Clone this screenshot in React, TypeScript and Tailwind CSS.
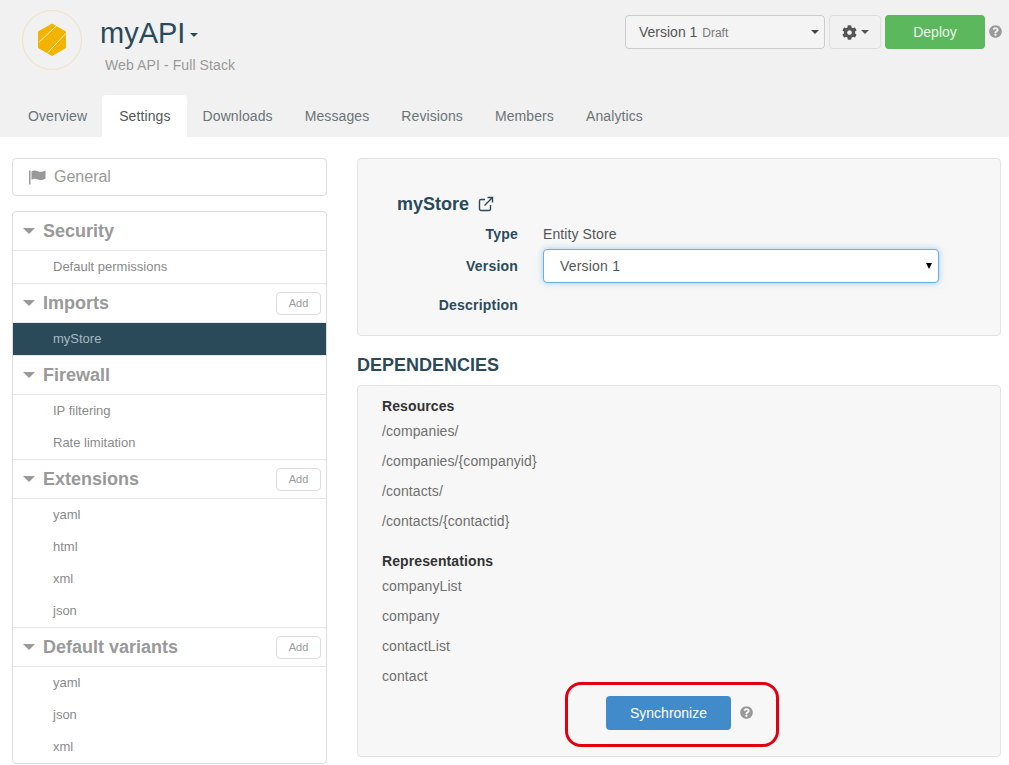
import { FaCog, FaQuestionCircle } from 'react-icons/fa';

const tabs = ['Overview', 'Settings', 'Downloads', 'Messages', 'Revisions', 'Members', 'Analytics'];

interface Section {
  title: string;
  add?: boolean;
  items: string[];
}

const sections: Section[] = [
  { title: 'Security', items: ['Default permissions'] },
  { title: 'Imports', add: true, items: ['myStore'] },
  { title: 'Firewall', items: ['IP filtering', 'Rate limitation'] },
  { title: 'Extensions', add: true, items: ['yaml', 'html', 'xml', 'json'] },
  { title: 'Default variants', add: true, items: ['yaml', 'json', 'xml'] },
];

const resources = ['/companies/', '/companies/{companyid}', '/contacts/', '/contacts/{contactid}'];
const representations = ['companyList', 'company', 'contactList', 'contact'];

function Caret({ className }: { className: string }) {
  return <span className={`inline-block w-0 h-0 border-x-[4px] border-x-transparent border-t-[4px] ${className}`} />;
}

function Logo() {
  return (
    <svg width="62" height="62" viewBox="0 0 62 62" className="shrink-0">
      <circle cx="31" cy="31" r="29.5" fill="none" stroke="#f0e2c0" strokeWidth="1" />
      <path d="M31 14.5 45 22.5 45 39 31 47 17 39 17 22.500Z" fill="#f2b400" />
      <path d="M18.5 32.700 35.700 16.700M26.700 43.700 45 24.300" stroke="#fff" strokeWidth="1" fill="none" opacity="0.85" />
    </svg>
  );
}

function Header() {
  return (
    <div className="bg-[#f1f1f1] h-[137px] flex flex-col">
      <div className="h-[95px] flex justify-between pl-[21px] pr-[7px]">
        <div className="flex pt-[9px]">
          <Logo />
          <div className="ml-[17px]">
            <div className="flex items-center h-[50px] text-[29px] text-[#2a4a5a]">
              myAPI
              <Caret className="border-t-[#2a4a5a] ml-[5px] mt-[2px]" />
            </div>
            <div className="ml-[5px] mt-[-4px] text-[14px] tracking-[0.1px] text-[#999]">Web API - Full Stack</div>
          </div>
        </div>
        <div className="flex items-start pt-[15px]">
          <div className="w-[200px] h-[34px] flex items-center justify-between pl-[13px] pr-[5px] bg-[#f4f4f4] border border-[#ccc] rounded text-[14px] text-[#555]">
            <span>
              Version 1 <span className="text-[12px] text-[#777] ml-[1px]">Draft</span>
            </span>
            <Caret className="border-t-[#444]" />
          </div>
          <div className="ml-[4px] w-[52px] h-[34px] flex items-center justify-center gap-[4px] border border-[#ddd] rounded text-[#555]">
            <FaCog className="text-[15px]" />
            <Caret className="border-t-[#555]" />
          </div>
          <div className="ml-[4px] w-[100px] h-[34px] flex items-center justify-center bg-[#5cb85c] rounded text-[14px] text-[#e9f5e9]">
            Deploy
          </div>
          <FaQuestionCircle className="ml-[4px] mt-[10px] text-[13px] text-[#999]" />
        </div>
      </div>
      <div className="flex h-[42px] pl-[12px]">
        {tabs.map((tab) => (
          <div
            key={tab}
            className={`flex items-center text-[14px] tracking-[0.1px] rounded-t ${
              tab === 'Settings' ? 'bg-white text-[#555] -ml-[1px] pl-[17px] pr-[16px]' : 'px-[16px] text-[#6b7478]'
            }`}
          >
            {tab}
          </div>
        ))}
      </div>
    </div>
  );
}

function Sidebar() {
  return (
    <div className="w-[315px] shrink-0">
      <div className="h-[38px] flex items-center pl-[16px] border border-[#ddd] rounded text-[16px] text-[#999]">
        <svg width="17" height="15" viewBox="0 0 17 15" fill="#999" className="mr-[8px]">
          <rect x="0" y="0.500" width="1.500" height="14" />
          <path d="M2.500 1.500C5 0 7 .5 9 1.300c2.500 1 4.500 .5 7.500-.8v8.300c-3 1.400-5 1.700-7.500.8C7 8.800 5 8.400 2.500 9.800Z" />
        </svg>
        General
      </div>
      <div className="mt-[15px] border border-[#ddd] rounded">
        {sections.map((section, i) => (
          <div key={section.title}>
            <div
              className={`flex items-center justify-between pl-[10px] pr-[5px] border-b border-[#e4e8ea] ${
                i > 0 ? 'h-[40px] border-t' : 'h-[39px]'
              }`}
            >
              <div className="flex items-center text-[18px] font-bold text-[#999]">
                <span className="inline-block w-0 h-0 mr-[8px] border-x-[6px] border-x-transparent border-t-[6px] border-t-[#999]" />
                {section.title}
              </div>
              {section.add && (
                <div className="w-[45px] h-[23px] flex items-center justify-center bg-white border border-[#ddd] rounded text-[11px] text-[#999]">
                  Add
                </div>
              )}
            </div>
            {section.items.map((item) => (
              <div
                key={item}
                className={`h-[32px] flex items-center pl-[40px] text-[13px] ${
                  item === 'myStore' ? 'bg-[#2a4a5a] text-[#a9b8c0]' : 'text-[#8a8a8a]'
                }`}
              >
                {item}
              </div>
            ))}
          </div>
        ))}
      </div>
    </div>
  );
}

function FormRow({ label, children, className }: { label: string; children?: React.ReactNode; className: string }) {
  return (
    <div className={`flex items-center ${className}`}>
      <div className="w-[160px] text-right text-[14px] font-bold tracking-[0.2px] text-[#2a4a5a]">{label}</div>
      <div className="ml-[25px]">{children}</div>
    </div>
  );
}

function Main() {
  return (
    <div className="w-[644px] ml-[30px] shrink-0">
      <div className="h-[178px] bg-[#f7f7f7] border border-[#e3e3e3] rounded pt-[33px] pl-[39px]">
        <div className="flex items-center h-[24px] text-[18px] font-bold text-[#2a4a5a]">
          myStore
          <svg width="16" height="16" viewBox="0 0 16 16" fill="none" stroke="#2a4a5a" strokeWidth="1.4" className="ml-[9px]">
            <path d="M12.500 9v4a1.500 1.500 0 0 1-1.500 1.500H3A1.500 1.500 0 0 1 1.500 13V5A1.500 1.500 0 0 1 3 3.500h4" />
            <path d="M6.500 9.500 14 2M9.500 1.500h5v5" />
          </svg>
        </div>
        <FormRow label="Type" className="h-[20px] mt-[8px] -ml-[39px]">
          <span className="text-[14px] tracking-[0.1px] text-[#555]">Entity Store</span>
        </FormRow>
        <FormRow label="Version" className="h-[34px] mt-[5px] -ml-[39px]">
          <div className="w-[396px] h-[34px] flex items-center justify-between pl-[16px] pr-[6px] bg-white border border-[#66afe9] rounded shadow-[0_0_6px_rgba(102,175,233,0.6)] text-[14px] tracking-[0.2px] text-[#555]">
            Version 1
            <span className="inline-block w-0 h-0 border-x-[3px] border-x-transparent border-t-[6px] border-t-black" />
          </div>
        </FormRow>
        <FormRow label="Description" className="h-[20px] mt-[12px] -ml-[39px]" />
      </div>
      <h2 className="mt-[19px] h-[20px] flex items-center text-[18px] font-bold text-[#2a4a5a]">DEPENDENCIES</h2>
      <div className="relative mt-[10px] h-[372px] bg-[#f7f7f7] border border-[#e3e3e3] rounded pt-[10px] pl-[24px]">
        <div className="h-[20px] flex items-center text-[14px] font-bold tracking-[0.1px] text-[#333]">Resources</div>
        {resources.map((r) => (
          <div key={r} className="h-[30px] flex items-center text-[14px] tracking-[0.1px] text-[#6f6f6f]">
            {r}
          </div>
        ))}
        <div className="mt-[15px] h-[20px] flex items-center text-[14px] font-bold tracking-[0.1px] text-[#333]">
          Representations
        </div>
        {representations.map((r) => (
          <div key={r} className="h-[30px] flex items-center text-[14px] tracking-[0.1px] text-[#6f6f6f]">
            {r}
          </div>
        ))}
        <div className="absolute left-[248px] top-[310px] w-[125px] h-[34px] flex items-center justify-center bg-[#428bca] rounded text-[14px] text-white">
          Synchronize
        </div>
        <FaQuestionCircle className="absolute left-[382px] top-[320px] text-[13px] text-[#999]" />
        <div className="absolute left-[207px] top-[296px] w-[214px] h-[65px] border-[3px] border-[#e1000f] rounded-[16px]" />
      </div>
    </div>
  );
}

export default function App() {
  return (
    <div className="w-[1009px] h-[765px] overflow-hidden bg-white font-['Liberation_Sans',Arial,sans-serif]">
      <Header />
      <div className="flex pl-[12px] pt-[21px]">
        <Sidebar />
        <Main />
      </div>
    </div>
  );
}
